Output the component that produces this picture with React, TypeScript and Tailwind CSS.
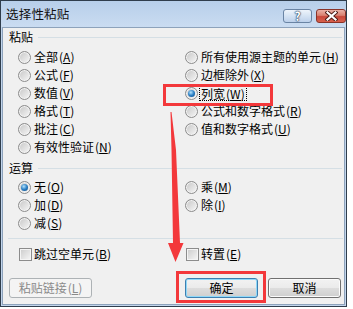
import React from "react";

function Acc({ k }: { k: string }) {
  return (
    <span className="ml-[1px]">
      (<span className="underline underline-offset-[1px]">{k}</span>)
    </span>
  );
}

function Radio({ checked }: { checked?: boolean }) {
  return (
    <span className="inline-flex w-[13px] h-[13px] shrink-0 items-center justify-center rounded-full border border-[#8c8c8c] bg-[linear-gradient(135deg,#c6c6c6,#f7f7f7)] shadow-[inset_0_0_0_1px_#f2f2f2]">
      {checked && (
        <span className="w-[7px] h-[7px] rounded-full bg-[radial-gradient(circle_at_40%_35%,#b4e2fb,#2b7fc4_50%,#0b4680)]" />
      )}
    </span>
  );
}

function Opt({
  label,
  k,
  checked,
  focus,
}: {
  label: string;
  k: string;
  checked?: boolean;
  focus?: boolean;
}) {
  return (
    <div className="flex h-[18px] items-center gap-[3px]">
      <Radio checked={checked} />
      {focus ? (
        <span className="-ml-[2px] inline-block h-[15px] border border-dotted border-black px-[1px] leading-[13px] whitespace-nowrap">
          {label}
          <Acc k={k} />
        </span>
      ) : (
        <span className="leading-[18px] whitespace-nowrap">
          {label}
          <Acc k={k} />
        </span>
      )}
    </div>
  );
}

function Check({ label, k }: { label: string; k: string }) {
  return (
    <div className="flex h-[18px] items-center gap-[2px]">
      <span className="w-[13px] h-[13px] shrink-0 border border-[#8c8c8c] bg-[linear-gradient(135deg,#cbcbcb,#f7f7f7)] shadow-[inset_0_0_0_1px_#f4f4f4]" />
      <span className="leading-[18px] whitespace-nowrap">
        {label}
        <Acc k={k} />
      </span>
    </div>
  );
}

function Group({ title }: { title: string }) {
  return (
    <div className="flex h-[18px] items-center pl-[6px] pr-[2px]">
      <span className="leading-[18px]">{title}</span>
      <div className="ml-[5px] h-px flex-1 bg-[#d5dfe5]" />
    </div>
  );
}

export default function App() {
  return (
    <div className="relative w-[353px] h-[309px] overflow-hidden bg-white font-['Noto_Sans_CJK_SC','Noto_Sans',sans-serif] text-[12px] text-black">
      <div className="flex flex-col w-[347px] h-[307px] border border-[#2f3d4c] bg-[#c2d5ec]">
        {/* Title bar */}
        <div className="flex h-[26px] shrink-0 items-start justify-between bg-[linear-gradient(#b7cfea,#cadcf1)] pl-[5px]">
          <span className="mt-[4px] text-[12.5px] leading-[18px] tracking-[0.2px] text-[#111]">
            选择性粘贴
          </span>
          <div className="mt-[8px] flex gap-[4px]">
            <div className="flex h-[14px] w-[29px] items-center justify-center rounded-[3px] border border-[#6a84a4] bg-[linear-gradient(#eef4fb,#d5e3f3_50%,#bcd0ea)]">
              <span className="text-[12px] font-bold leading-[12px] text-white [text-shadow:0_0_1px_#243f60,0_0_1px_#243f60,0_0_2px_#243f60]">
                ?
              </span>
            </div>
            <div className="flex h-[14px] w-[30px] items-center justify-center rounded-[3px] border border-[#8a3328] bg-[linear-gradient(#eab1a6,#d9806f_45%,#c8483a_55%,#d8614e)]">
              <svg width="13" height="10" viewBox="0 0 13 10">
                <path d="M2.5 1.5 L10.5 8.5 M10.5 1.5 L2.5 8.5" stroke="#4a1a14" strokeWidth="4" strokeLinecap="square" />
                <path d="M2.5 1.5 L10.5 8.5 M10.5 1.5 L2.5 8.5" stroke="#ffffff" strokeWidth="2.2" strokeLinecap="square" />
              </svg>
            </div>
          </div>
        </div>

        {/* Content */}
        <div className="mx-[1px] mb-[1px] flex flex-1 flex-col border border-[#8da2bb] bg-[#f0f0f0]">
          <Group title="粘贴" />
          <div className="mt-[2px] flex pl-[15px]">
            <div className="flex w-[167px] flex-col">
              <Opt label="全部" k="A" />
              <Opt label="公式" k="F" />
              <Opt label="数值" k="V" />
              <Opt label="格式" k="T" />
              <Opt label="批注" k="C" />
              <Opt label="有效性验证" k="N" />
            </div>
            <div className="flex flex-col">
              <Opt label="所有使用源主题的单元" k="H" />
              <Opt label="边框除外" k="X" />
              <Opt label="列宽" k="W" checked focus />
              <Opt label="公式和数字格式" k="R" />
              <Opt label="值和数字格式" k="U" />
            </div>
          </div>

          <div className="mt-[3px]">
            <Group title="运算" />
          </div>
          <div className="mt-[1px] flex pl-[15px]">
            <div className="flex w-[167px] flex-col">
              <Opt label="无" k="O" checked />
              <Opt label="加" k="D" />
              <Opt label="减" k="S" />
            </div>
            <div className="flex flex-col">
              <Opt label="乘" k="M" />
              <Opt label="除" k="I" />
            </div>
          </div>

          <div className="mt-[6px] ml-[5px] mr-[1px] h-px bg-[#d5dfe5]" />

          <div className="mt-[6px] flex pl-[16px]">
            <div className="w-[167px]">
              <Check label="跳过空单元" k="B" />
            </div>
            <Check label="转置" k="E" />
          </div>

          <div className="mt-[15px] flex pl-[6px]">
            <div className="flex h-[20px] w-[83px] items-center justify-center rounded-[3px] border border-[#adb2b5] bg-[#f4f4f4] leading-[18px] text-[#8a8a8a]">
              粘贴链接<Acc k="L" />
            </div>
            <div className="ml-[93px] flex h-[20px] w-[73px] items-center justify-center rounded-[3px] border border-[#3c7fb1] bg-[linear-gradient(#f2f2f2,#ebebeb_49%,#dddddd_50%,#cfcfcf)] shadow-[inset_0_0_0_1px_#8fd8f8] leading-[18px]">
              确定
            </div>
            <div className="ml-[10px] flex h-[20px] w-[73px] items-center justify-center rounded-[3px] border border-[#707070] bg-[linear-gradient(#f2f2f2,#ebebeb_49%,#dddddd_50%,#cfcfcf)] shadow-[inset_0_0_0_1px_#fbfbfb] leading-[18px]">
              取消
            </div>
          </div>
        </div>
      </div>

      {/* Annotations */}
      <div className="pointer-events-none absolute left-[163px] top-[84px] h-[22px] w-[110px] border-[3px] border-[#f3383b]" />
      <div className="pointer-events-none absolute left-[176px] top-[271px] h-[32px] w-[90px] border-[3px] border-[#f3383b]" />
      <svg className="pointer-events-none absolute left-0 top-0" width="353" height="309" viewBox="0 0 353 309">
        <polygon
          points="170.5,112 171.5,112 176,150 180,243 183.5,243 175.5,262 168,243 173,243 171.5,150"
          fill="#f3383b"
        />
      </svg>
    </div>
  );
}
